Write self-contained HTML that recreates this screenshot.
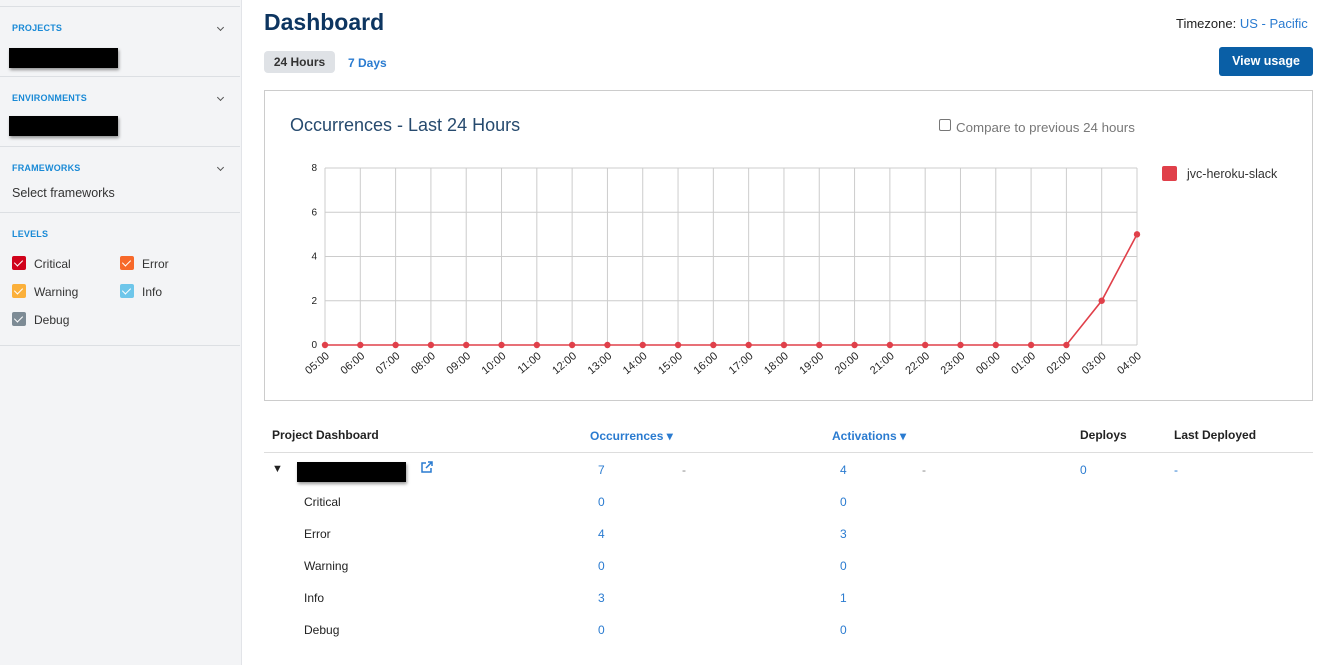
<!DOCTYPE html>
<html><head><style>
*{box-sizing:border-box;margin:0;padding:0}
body{width:1331px;height:665px;overflow:hidden;font-family:"Liberation Sans",sans-serif;background:#fff;position:relative;color:#222}
.sb{position:absolute;left:0;top:0;width:242px;height:665px;background:#f3f4f6;border-right:1px solid #e2e4e8}
.sec{position:absolute;left:0;width:240px;border-top:1px solid #dcdfe3}
.h{position:absolute;left:12px;font-size:9px;font-weight:bold;color:#1a8ad6;letter-spacing:.2px}
.chev{position:absolute;left:218px;width:5px;height:5px;border-right:1.5px solid #555;border-bottom:1.5px solid #555;transform:rotate(45deg)}
.red{position:absolute;left:9px;width:109px;height:20px;background:#000;box-shadow:1px 2px 3px rgba(0,0,0,.4)}
.cb{position:absolute;width:14px;height:14px;border-radius:2px}
.cb:after{content:"";position:absolute;left:4px;top:2px;width:4px;height:7px;border-right:1.5px solid #fff;border-bottom:1.5px solid #fff;transform:rotate(45deg)}
.lbl{position:absolute;font-size:12px;color:#333}
.t{position:absolute;font-size:12px}
.b{color:#2a7bd0}
</style></head><body>
<div class="sb">
<div class="sec" style="top:6px"></div>
<div class="h" style="top:23px">PROJECTS</div><div class="chev" style="top:25px"></div>
<div class="red" style="top:48px"></div>
<div class="sec" style="top:76px"></div>
<div class="h" style="top:93px">ENVIRONMENTS</div><div class="chev" style="top:95px"></div>
<div class="red" style="top:116px"></div>
<div class="sec" style="top:146px"></div>
<div class="h" style="top:163px">FRAMEWORKS</div><div class="chev" style="top:165px"></div>
<div class="lbl" style="left:12px;top:186px;font-size:12.5px">Select frameworks</div>
<div class="sec" style="top:212px"></div>
<div class="h" style="top:229px">LEVELS</div>
<div class="cb" style="left:12px;top:256px;background:#d0021b"></div><div class="lbl" style="left:34px;top:257px">Critical</div>
<div class="cb" style="left:120px;top:256px;background:#f7692a"></div><div class="lbl" style="left:142px;top:257px">Error</div>
<div class="cb" style="left:12px;top:284px;background:#fbb03b"></div><div class="lbl" style="left:34px;top:285px">Warning</div>
<div class="cb" style="left:120px;top:284px;background:#6ec6ea"></div><div class="lbl" style="left:142px;top:285px">Info</div>
<div class="cb" style="left:12px;top:312px;background:#7d8b95"></div><div class="lbl" style="left:34px;top:313px">Debug</div>
<div class="sec" style="top:345px"></div>
</div>

<div class="t" style="left:264px;top:9px;font-size:23px;font-weight:bold;color:#0d3560">Dashboard</div>
<div class="t" style="left:1176px;top:16px;color:#222;font-size:13px">Timezone: <span class="b">US - Pacific</span></div>
<div class="t" style="left:264px;top:51px;width:71px;height:22px;background:#dfe2e6;border-radius:4px;font-weight:bold;font-size:12px;color:#333;text-align:center;line-height:22px">24 Hours</div>
<div class="t b" style="left:348px;top:56px;font-weight:bold">7 Days</div>
<div class="t" style="left:1219px;top:47px;width:94px;height:29px;background:#0a5fa6;border-radius:3px;color:#fff;font-weight:bold;font-size:12.5px;text-align:center;line-height:29px">View usage</div>

<div style="position:absolute;left:264px;top:90px;width:1049px;height:311px;border:1px solid #ccc"></div>
<div class="t" style="left:290px;top:115px;font-size:18px;color:#264a6e">Occurrences - Last 24 Hours</div>
<div style="position:absolute;left:939px;top:119px;width:12px;height:12px;border:1px solid #777;border-radius:2px"></div>
<div class="t" style="left:956px;top:120px;color:#777;font-size:13.3px">Compare to previous 24 hours</div>
<div style="position:absolute;left:1162px;top:166px;width:15px;height:15px;background:#e0404a;border-radius:2px"></div>
<div class="t" style="left:1187px;top:167px;color:#333;font-size:12.5px">jvc-heroku-slack</div>

<svg style="position:absolute;left:0;top:0" width="1331" height="665">
<g stroke="#ccc" stroke-width="1" fill="none" id="g"></g>
<g id="lab" font-family="Liberation Sans" font-size="11" fill="#222"></g>
</svg>
<script>
var g=document.getElementById('g'),lab=document.getElementById('lab'),s='',l='';
var x0=325,x1=1137,y0=345,y8=168,st=(x1-x0)/23;
for(var i=0;i<24;i++){var x=x0+i*st;s+='<line x1="'+x+'" y1="'+y8+'" x2="'+x+'" y2="'+y0+'"/>';
var h=(5+i)%24;var tt=(h<10?'0':'')+h+':00';l+='<text transform="translate('+(x+5)+',357) rotate(-40)" text-anchor="end">'+tt+'</text>';}
for(var v=0;v<=8;v+=2){var y=y0-v*(y0-y8)/8;s+='<line x1="'+x0+'" y1="'+y+'" x2="'+x1+'" y2="'+y+'"/>';l+='<text x="317" y="'+(y+3)+'" text-anchor="end" font-size="10">'+v+'</text>';}
var vals=[];for(i=0;i<22;i++)vals.push(0);vals.push(2,5);
var pts=vals.map(function(v,i){return (x0+i*st)+','+(y0-v*(y0-y8)/8)});
s+='<polyline stroke="#e0404a" stroke-width="1.6" points="'+pts.join(' ')+'"/>';
pts.forEach(function(p){var a=p.split(',');s+='<circle cx="'+a[0]+'" cy="'+a[1]+'" r="3.2" fill="#e0404a" stroke="none"/>'});
g.innerHTML=s;lab.innerHTML=l;
</script>

<div class="t" style="left:272px;top:428px;font-weight:bold;color:#222">Project Dashboard</div>
<div class="t b" style="left:590px;top:429px;font-weight:bold">Occurrences ▾</div>
<div class="t b" style="left:832px;top:429px;font-weight:bold">Activations ▾</div>
<div class="t" style="left:1080px;top:428px;font-weight:bold">Deploys</div>
<div class="t" style="left:1174px;top:428px;font-weight:bold">Last Deployed</div>
<div style="position:absolute;left:264px;top:452px;width:1049px;height:1px;background:#ddd"></div>
<div class="t" style="left:272px;top:463px;font-size:11px">▼</div>
<div style="position:absolute;left:297px;top:462px;width:109px;height:20px;background:#000;box-shadow:1px 2px 3px rgba(0,0,0,.4)"></div>
<svg style="position:absolute;left:421px;top:461px" width="12" height="12" fill="none" stroke="#2a7bd0" stroke-width="1.5"><path d="M5 2H1v9h9V7M7 1h4v4M11 1L5 7"/></svg>
<div class="t b" style="left:598px;top:463px">7</div><div class="t" style="left:682px;top:463px;color:#888">-</div>
<div class="t b" style="left:840px;top:463px">4</div><div class="t" style="left:922px;top:463px;color:#888">-</div>
<div class="t b" style="left:1080px;top:463px">0</div><div class="t b" style="left:1174px;top:463px">-</div>
<div class="t" style="left:304px;top:495px">Critical</div><div class="t b" style="left:598px;top:495px">0</div><div class="t b" style="left:840px;top:495px">0</div>
<div class="t" style="left:304px;top:527px">Error</div><div class="t b" style="left:598px;top:527px">4</div><div class="t b" style="left:840px;top:527px">3</div>
<div class="t" style="left:304px;top:559px">Warning</div><div class="t b" style="left:598px;top:559px">0</div><div class="t b" style="left:840px;top:559px">0</div>
<div class="t" style="left:304px;top:591px">Info</div><div class="t b" style="left:598px;top:591px">3</div><div class="t b" style="left:840px;top:591px">1</div>
<div class="t" style="left:304px;top:623px">Debug</div><div class="t b" style="left:598px;top:623px">0</div><div class="t b" style="left:840px;top:623px">0</div>
</body></html>
